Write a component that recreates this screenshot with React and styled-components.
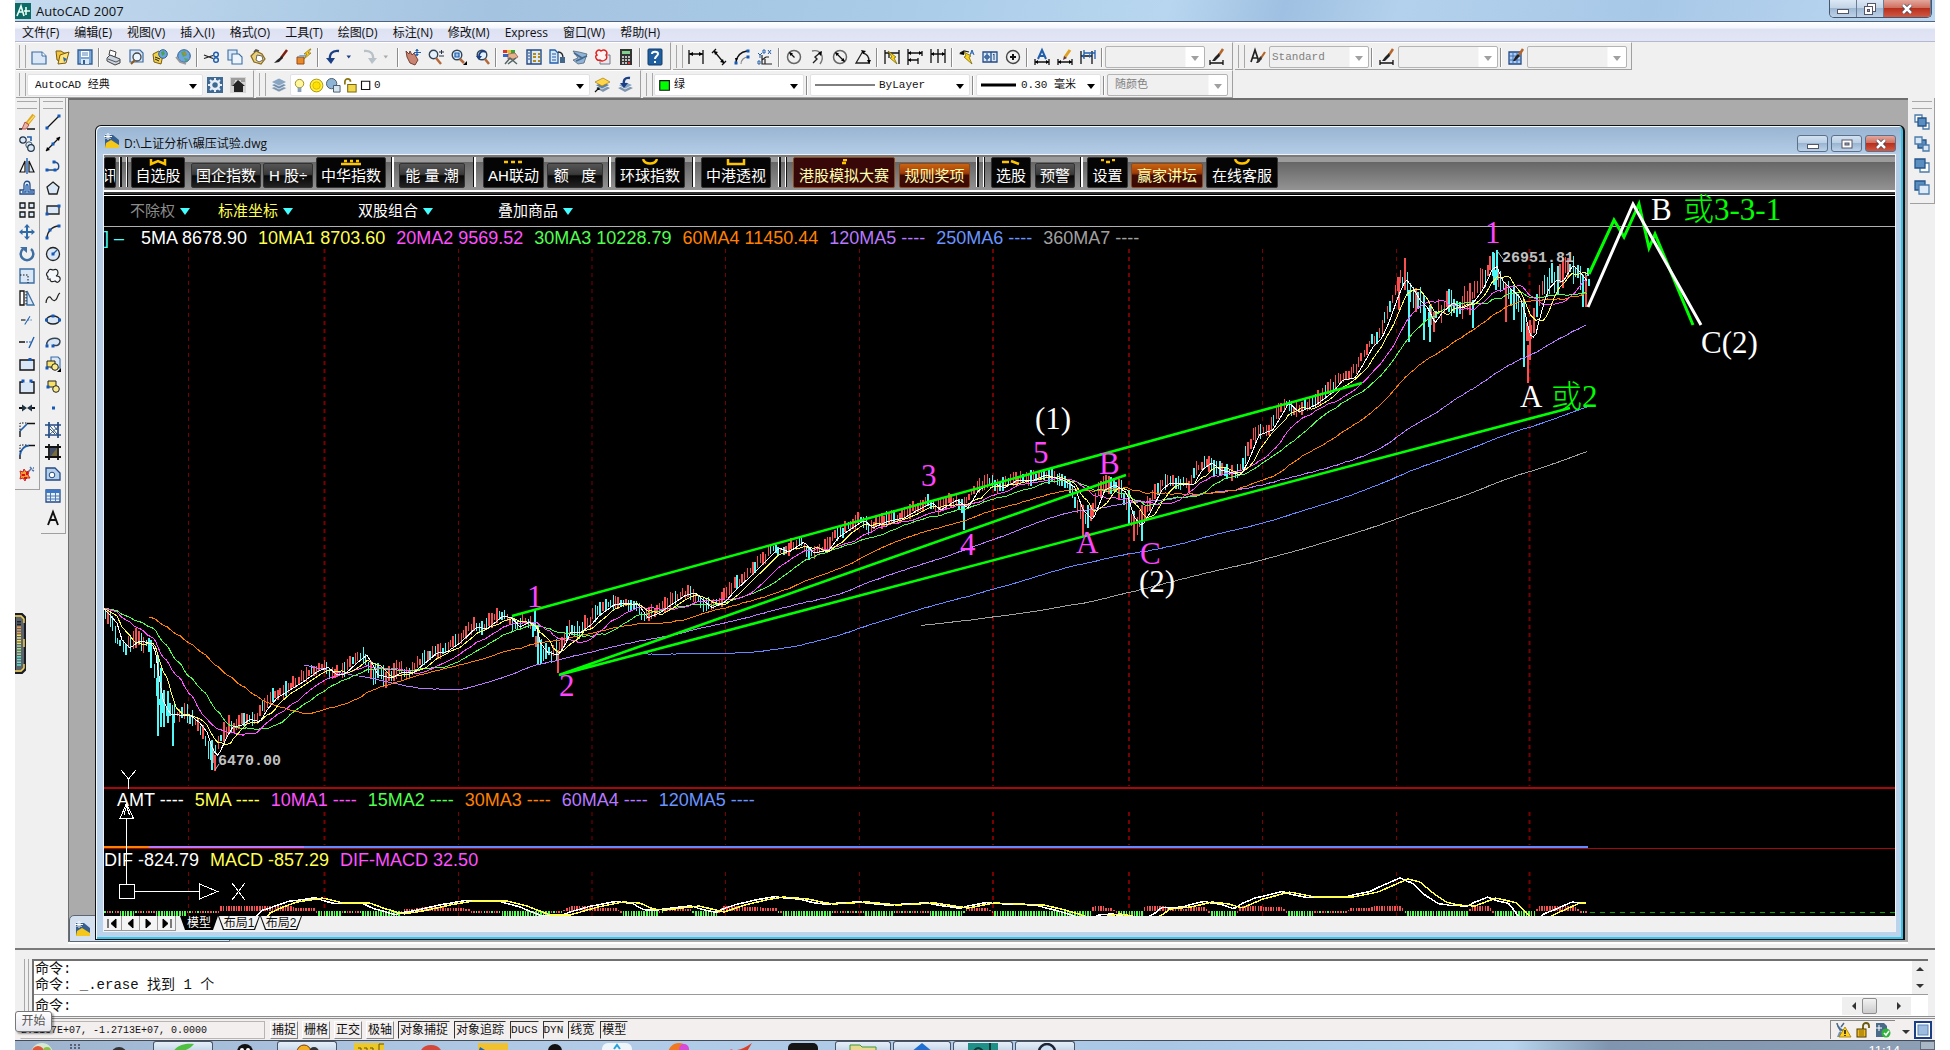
import React from "react";
import styled, { createGlobalStyle, css } from "styled-components";

const ui = `"Open Sans", "Noto Sans CJK SC", sans-serif`;
const fixed = `"Liberation Mono", "Noto Sans CJK SC", monospace`;
const sans = `"Liberation Sans", "Noto Sans CJK SC", sans-serif`;

const Global = createGlobalStyle`
  * { box-sizing: border-box; }
  body { margin: 0; background: #fff; overflow: hidden; }
  button, select, input { font: inherit; color: inherit; margin: 0; padding: 0; border: 0; background: none; border-radius: 0; }
  svg { display: block; flex: none; }
`;

const Page = styled.div`
  height: 100vh;
  padding: 0 15px;
  font: 12px/16px ${ui};
  color: #111;
`;
const AppWindow = styled.div`
  position: relative;
  display: flex;
  flex-direction: column;
  height: 100%;
  background: #f0f0f0;
  overflow: hidden;
`;

/* ---------- title and menu ---------- */
const TitleBar = styled.header`
  display: flex;
  align-items: center;
  height: 22px;
  flex: none;
  padding-right: 3px;
  gap: 5px;
  border-bottom: 1px solid #53627c;
  background: linear-gradient(105deg, #c5daee 0%, #b3cfe8 12%, #a4c3e0 25%, #a9cbe8 45%, #b8d6ef 60%, #9fc0e2 66%, #b3d1ec 72%, #a8c8e8 85%, #bcd8f0 100%);
`;
const TitleText = styled.h1`
  flex: 1;
  margin: 0;
  font: 13px/16px ${ui};
`;
const CaptionGroup = styled.div`
  display: flex;
  align-self: flex-start;
  height: 18px;
  border: 1px solid #46566b;
  border-top: 0;
  border-radius: 0 0 5px 5px;
  overflow: hidden;
`;
const redFace = css`background: linear-gradient(#e3a79d, #d0705f 45%, #b8301d 50%, #cf5a45);`;
const Caption = styled.button`
  display: flex;
  align-items: center;
  justify-content: center;
  width: ${(p) => (p.$close ? 47 : 27)}px;
  border-right: 1px solid #6b7d94;
  background: linear-gradient(#dce8f4, #c3d5e8 45%, #9fb8d2 50%, #bcd2e8);
  ${(p) => p.$close && redFace}
`;
const MenuBar = styled.nav`
  display: flex;
  align-items: center;
  flex: none;
  height: 20px;
  padding: 2px 0 0 7px;
  gap: 15px;
  border-bottom: 1px solid #b4b9d0;
  background: linear-gradient(#fff 0, #f4f6fc 30%, #dde2f3 40%, #e2e5f5 100%);
`;
const MenuItem = styled.button`
  font: 12px/16px ${ui};
  white-space: nowrap;
`;

/* ---------- toolbars ---------- */
const ToolbarRow = styled.div`
  display: flex;
  flex: none;
  height: 28px;
  padding-left: 1px;
`;
const Toolbar = styled.div`
  display: flex;
  align-items: center;
  padding: 2px 4px 0 11px;
  position: relative;
  border-right: 1px solid #a0a0a0;
  border-bottom: 1px solid #a0a0a0;
  border-top: 1px solid #fff;
  margin-right: 2px;
  &::before {
    content: "";
    position: absolute;
    left: 3px;
    top: 2px;
    bottom: 1px;
    width: 5px;
    border: solid #a8a8a8;
    border-width: 0 1px;
  }
`;
const ToolButton = styled.button`
  display: flex;
  align-items: center;
  justify-content: center;
  width: ${(p) => p.$w || 23}px;
  height: 22px;
`;
const Sep = styled.span`
  width: 6px;
  height: 19px;
  flex: none;
  background: linear-gradient(90deg, transparent 2px, #8c8c8c 2px 3px, #fff 3px 4px, transparent 4px);
`;
const ComboBox = styled.label`
  display: flex;
  align-items: center;
  width: ${(p) => p.$w}px;
  height: 22px;
  padding-left: ${(p) => p.$pad || 7}px;
  gap: 2px;
  background: ${(p) => (p.$off ? "linear-gradient(90deg,#f0f0f0 calc(100% - 19px),#fff calc(100% - 18px))" : "#fff")};
  border: ${(p) => (p.$off ? "1px solid #b4b4b4" : "1px solid #e2e2e6")};
  border-radius: 2px;
  color: ${(p) => (p.$off ? "#808080" : "#111")};
  position: relative;
  &::after {
    content: "";
    position: absolute;
    right: 5px;
    top: 9px;
    border: solid transparent;
    border-width: 5px 4px 0;
    border-top-color: ${(p) => (p.$off ? "#a0a0a0" : "#000")};
  }
`;
const ComboSelect = styled.select`
  appearance: none;
  flex: 1;
  min-width: 0;
  height: 20px;
  font: 11px/16px ${fixed};
  outline: 0;
  opacity: 1;
`;

function Combo({ w, value, label, off, icons, pad }) {
  return (
    <ComboBox $w={w} $off={off} $pad={pad}>
      {icons}
      <ComboSelect aria-label={label} disabled={off}>
        <option>{value}</option>
      </ComboSelect>
    </ComboBox>
  );
}

/* ---------- icon drawings, 16 x 16 ---------- */
const blue = "#1f5fae";
const pale = "#d9e7f6";
const L = (d, s = "#111", w = 1.3, f = "none") => <path d={d} stroke={s} strokeWidth={w} fill={f} />;
const Dot = ({ x, y }) => <rect x={x - 1.5} y={y - 1.5} width="3" height="3" fill="#1458b8" />;

const icons = {
  app: <><rect width="16" height="16" fill="#0d6b66" />{L("M2 13L6 3l3 10M3 9h5M11 4v8M9 8h6", "#e8fff8", 1.6)}</>,
  newDoc: <>{L("M1 3h10l4 4v8H1z", "#3b6ea5", 1.2, pale)}{L("M11 3v4h4", "#3b6ea5", 1, "#fff")}</>,
  open: <>{L("M2 2h5l3 2h4l-3 10-8-3z", "#7a5c10", 1, "#f1c53a")}{L("M6 6l9-3-3 11-8 1z", "#7a5c10", 1, "#ffe27a")}<path d="M9 8l4 2-3 3z" fill="#2b66b0" /></>,
  save: <>{L("M1 1h14v14H1z", "#2f5f98", 1.3, "#7ea8d6")}<path d="M4 2h8v6H4z" fill="#fff" />{L("M5 4h6M5 6h6", "#5b83b5", 1)}<path d="M4 10h8v5H4z" fill="#dce8f5" /><path d="M6 11h2v4H6z" fill="#2f5f98" /></>,
  print: <>{L("M4 1l6 2-1 5-6-2z", "#444", 1, "#fff")}{L("M1 9l3-3 10 4v4l-5 2-8-4z", "#444", 1, "#c9d3df")}{L("M2 10l8 3 4-2", "#555", 1)}</>,
  preview: <>{L("M1 1h10l3 3v9H1z", "#3b6ea5", 1.2, pale)}<circle cx="8" cy="8" r="4" fill="#eaf6ff" stroke="#444" strokeWidth="1.3" />{L("M6 11l-4 4", "#8a5a20", 2)}</>,
  publish: <>{L("M1 5l6-3 4 4-2 9-7-2z", "#7a5c10", 1, "#f1d04a")}<circle cx="11" cy="5" r="4.3" fill="#6aa5dc" stroke="#2f5f98" /><path d="M9 3l3-1 1 3-3 2z" fill="#4aa24a" />{L("M3 8l5 2M3 10l4 2", "#222", 1)}</>,
  globe: <><circle cx="9" cy="7" r="6.3" fill="#6aa5dc" stroke="#2f5f98" /><path d="M6 3l4-1 2 4-4 2zM9 9l4 1-2 3z" fill="#55a855" /><path d="M8 3l4 2-3 1z" fill="#e07a2a" />{L("M1 8l4 5 6 2", "#999", 1.800)}</>,
  cut: <>{L("M0 6l9 3.500M0 9.500L9 6.500", "#222", 1.3)}<circle cx="12" cy="5.500" r="2.300" fill="none" stroke={blue} strokeWidth="1.5" /><circle cx="12" cy="11" r="2.300" fill="none" stroke={blue} strokeWidth="1.5" /></>,
  copy: <>{L("M1 1h9v10H1z", "#3b6ea5", 1.1, pale)}{L("M5 5h7l3 3v7H5z", "#3b6ea5", 1.1, "#eef5fc")}</>,
  paste: <>{L("M1 7l5-5 6 3 3 5-4 5-7-2z", "#8a6a1a", 1.2, "#e9cf7c")}{L("M7 6l5 1 1 4-4 2-3-2z", "#666", 1, "#fff")}{L("M4 3l2-2 3 1", "#555", 1.6)}</>,
  brush: <>{L("M14 1L8 9", "#7c1f12", 2.500)}<path d="M9 7l1 2-4 4-5 1 3-3z" fill="#222" /></>,
  match: <>{L("M1 8h7v7H1z", "#9a4a10", 1, "#e8892a")}<path d="M1 8l3-2h7l-3 2z" fill="#7ea8d6" /><path d="M14 0L8 5h3l-3 5 7-6h-3l3-4z" fill="#ffd21a" stroke="#8a6a00" strokeWidth=".7" /></>,
  undo: <>{L("M14 2C7 1 4 5 5 12", "#1b3f85", 2.300)}<path d="M1 9h9l-4 6z" fill="#1b3f85" /></>,
  redo: <>{L("M2 2c7-1 10 3 9 10", "#b8c0c8", 2.300)}<path d="M6 9h9l-5 6z" fill="#b8c0c8" /></>,
  tri: <path d="M2 6h6l-3 4z" fill="#1b3f85" />,
  triOff: <path d="M2 6h6l-3 4z" fill="#aaa" />,
  pan: <><path d="M1 2l3 3 1-3 2 4 2-2 4 7-3 5-5-2L2 8z" fill="#c98572" stroke="#6a3528" strokeWidth=".9" />{L("M12 0v7M9 3.500h7", blue, 1.2)}<path d="M12 0l2 2h-4zM12 7l2-2h-4z" fill={blue} /></>,
  zoomRt: <><circle cx="5.500" cy="5.500" r="4.200" fill="#e4f1fc" stroke="#345" strokeWidth="1.4" />{L("M8 9l5 6", "#b5693a", 2.500)}{L("M11 3h5M13.500 1v4M11 7h5", "#234", 1)}</>,
  zoomWin: <><circle cx="6" cy="6" r="4.800" fill="#e4f1fc" stroke="#345" strokeWidth="1.4" />{L("M4 4h4v4H4z", blue, 1.2, "#9cc2ea")}{L("M9 10l4 4", "#b5693a", 2.500)}<path d="M16 12v4h-4z" /></>,
  zoomPrev: <><circle cx="8" cy="6" r="4.800" fill="#e4f1fc" stroke="#345" strokeWidth="1.4" />{L("M11 10l4 5", "#b5693a", 2.500)}{L("M12 3C7 1 5 4 5 8", "#1b3f85", 1.8)}<path d="M2 7h6l-3 4z" fill="#1b3f85" /></>,
  props: <><path d="M0 1h4v3H0z" fill="#d33" /><path d="M4 1h4v3H4z" fill="#e8c22a" /><path d="M8 1h4v3H8z" fill="#3a3" /><path d="M0 5h5v3H0z" fill="#36c" /><path d="M5 5l7-1 3 4-4 2-6 0z" fill="#e7b18c" stroke="#844" strokeWidth=".7" />{L("M2 15l5-6 7 6M5 15l8-6", "#566", 1.500)}</>,
  design: <>{L("M1 1h14v14H1z", "#234a85", 1.400, "#dce9f7")}{L("M5 1v14", "#234a85", 1.400)}{L("M7 5h3M12 5h2M7 8h3M12 8h2M7 12h3M12 12h2", "#b88a10", 2)}{L("M2 4h2M2 7h2M2 10h2", "#234a85", 1)}</>,
  palette: <>{L("M1 1h5l3 3v10H1z", blue, 1.300, pale)}{L("M3 5h4M3 8h4M3 11h4", blue, 1.200)}{L("M9 3c4 0 5 2 5 6", "#222", 1.300)}<path d="M11 8h5v6h-5z" fill="#468" /></>,
  sheet: <><path d="M1 2l6 1 8 2-3 9-6 1-5-4 5-2z" fill="#8fb4d8" stroke="#567" strokeWidth=".8" />{L("M2 4l8 5 5-2M4 12l7-3", "#47698c", 1.600)}</>,
  markup: <>{L("M5 6h10v9H5z", "#778", 1, "#e8e8ee")}{L("M2 2q2-2 4 0q3-2 5 0q2 2 0 4q2 3-1 5q-3 2-5 0q-3 1-4-2q-1-2 1-3q-2-2 0-4z", "#d22", 1.400, "#fff3f3")}</>,
  calc: <><rect x="2" y="0" width="12" height="16" fill="#333" /><rect x="4" y="2" width="8" height="3" fill="#7fd08a" />{L("M4 8h2M7 8h2M10 8h2M4 11h2M7 11h2M10 11h2M4 14h2M7 14h2", "#eee", 1.600)}<path d="M10 13h2v2h-2z" fill="#d33" /></>,
  help: <><rect x="1" y="0" width="14" height="16" rx="1" fill="#1f5f9f" stroke="#123c6c" />{L("M5 5c0-3 6-3 6 0 0 2-3 2-3 5M8 12v2", "#fff", 2)}</>,
  dLin: <>{L("M1 1v14M15 1v14M1 5h14")}<path d="M1 5l4-2v4zM15 5l-4-2v4z" /></>,
  dAli: <>{L("M1 4l4-4M11 16l4-4M3 2l10 12")}<path d="M3 2l4 1-3 3zM13 14l-4-1 3-3z" /></>,
  dArc: <>{L("M2 13C3 6 7 3 13 2", "#111", 1.300)}{L("M7 15c0-4 3-7 7-7", "#888", 1.100)}<path d="M2 13l-1-4h3z" /><Dot x={14} y={2} /><Dot x={14} y={8} /><Dot x={2} y={14} /></>,
  dOrd: <>{L("M5 6v9h10M5 11l4-3h3M8 15V8", "#222", 1.200)}{L("M1 4l2 2 2-2M3 6v3M11 1l3 4M14 1l-3 4M6 1h2v3H6zM1 12h2v3H1z", blue, 1)}</>,
  dRad: <><circle cx="8" cy="8" r="6.500" fill="none" stroke="#666" strokeWidth="1.500" />{L("M4 4l4.500 4.500")}<path d="M3 3l4 1.500L4.500 7z" /></>,
  dJog: <>{L("M3 2c9-2 13 6 8 13", "#777", 1.400)}{L("M4 14l4-4-2-2 6-5", "#222", 1.400)}<path d="M13 2l-1 5-3-3z" /></>,
  dDia: <><circle cx="8" cy="8" r="6.500" fill="none" stroke="#666" strokeWidth="1.500" />{L("M4 4l8 8")}<path d="M3 3l4 1.500L4.500 7zM13 13l-4-1.500L11.500 9z" /></>,
  dAng: <>{L("M8 2L1 14h14M8 4c4 1 6 4 6 8", "#222", 1.300)}<path d="M6 1l5 1-3 3zM14 15l-2-4h4z" /></>,
  dQuick: <>{L("M1 1v14M15 1v14M1 4h14M5 4v5")}<path d="M4 2l8 6-2 1 3 6-7-6 2-1z" fill="#ffd21a" stroke="#7a6a00" strokeWidth=".8" /></>,
  dBase: <>{L("M1 0v16M1 4h14M1 11h10M15 2v5M11 9v6")}<path d="M1 4l3-2v4zM1 11l3-2v4zM15 4l-3-2v4z" /></>,
  dCont: <>{L("M1 0v14M8 0v14M15 0v14M1 5h14")}<path d="M1 5l3-2v4zM15 5l-3-2v4z" /></>,
  leader: <>{L("M1 4l4-2 5 1", "#222", 1.200)}<path d="M0 5l5-3v4z" /><path d="M5 3l7 4-2 1 3 7-8-7 2-1z" fill="#ffd21a" stroke="#7a6a00" strokeWidth=".8" />{L("M11 6l2-5 2 5M12 4h2", blue, 1)}</>,
  tol: <>{L("M1 3h14v10H1zM9 3v10", "#234a85", 1.300, pale)}<circle cx="5" cy="8" r="2" fill="none" stroke={blue} />{L("M5 4v8M2 8h6M12 5v6M11 6l1-1", "#234a85", 1)}</>,
  center: <><circle cx="8" cy="8" r="6.500" fill="none" stroke="#444" strokeWidth="1.400" />{L("M8 5v6M5 8h6", "#111", 2)}</>,
  dEdit: <>{L("M4 10L8 1l4 9M5.500 7h5", blue, 2)}{L("M1 10v6M15 10v6M1 13h14")}<path d="M1 13l3-2v4zM15 13l-3-2v4z" /></>,
  dTedit: <>{L("M13 1L8 8", "#e0a020", 3)}<path d="M7 7l3 2-4 2z" fill="#633" />{L("M1 10v6M15 10v6M1 13h14")}<path d="M1 13l3-2v4zM15 13l-3-2v4z" /></>,
  dUpd: <>{L("M1 2v13M12 2v13M1 7h11")}{L("M4 1v9M15 1v9M4 4h11", blue, 1.300)}<path d="M1 7l3-2v4zM12 7l-3-2v4z" fill={blue} /></>,
  dBrush: <>{L("M14 0l-4 6", "#b5652a", 2.500)}<path d="M10 4l1 3-5 5H3l3-4z" fill="#222" />{L("M1 11v5M14 11v5M1 14h13")}</>,
  tBrush: <>{L("M1 13L5 1l4 12M2 9h6", "#222", 1.700)}{L("M15 3l-4 6", "#b5652a", 2.200)}<path d="M11 7l1 3-4 4H6l2-4z" fill="#333" /></>,
  tabBrush: <>{L("M1 3h12v12H1z", "#234a85", 1.300, "#aecbf0")}{L("M1 7h12M1 11h12M5 3v12M9 3v12", "#3c6fb6", 1)}{L("M15 0l-4 6", "#b5652a", 2.500)}<path d="M10 5l2 2-5 5H5l2-4z" fill="#222" /></>,
  gear: <><rect width="16" height="16" fill="#3d6994" /><circle cx="8" cy="8" r="4" fill="none" stroke="#e6eef7" strokeWidth="2.500" />{L("M8 1v3M8 12v3M1 8h3M12 8h3M3 3l2 2M11 11l2 2M13 3l-2 2M5 11l-2 2", "#e6eef7", 2)}</>,
  home: <><rect width="16" height="16" fill="#d4d4d4" />{L("M1 2h14M1 4h4M11 4h4M1 6h3M1 8h2", "#666", 1)}<path d="M8 3l7 6h-2v6H4V9H2z" fill="#222" /></>,
  layers: <><path d="M0 11l8-3 8 3-8 4z" fill="#7d95ad" stroke="#fff" strokeWidth=".5" /><path d="M0 8l8-3 8 3-8 4z" fill="#6d8cae" stroke="#fff" strokeWidth=".7" /><path d="M0 5l8-4 8 4-8 4z" fill="#89a5c1" stroke="#fff" strokeWidth=".7" /></>,
  layerCur: <><path d="M2 11l8-3 6 3-7 4z" fill="#7d95ad" /><path d="M1 8l8-3 7 3-8 4z" fill="#5f83aa" stroke="#fff" strokeWidth=".7" /><path d="M1 5l8-4 7 4-8 4z" fill="#ffd64a" stroke="#a67b00" strokeWidth=".7" />{L("M1 15l4-4M3 11h2v2", "#111", 1.200)}</>,
  layerPrev: <><path d="M1 11l8-3 7 3-8 4z" fill="#7d95ad" /><path d="M1 8l8-3 7 3-8 4z" fill="#89a5c1" stroke="#fff" strokeWidth=".7" />{L("M13 1C8 0 6 3 7 8", "#1b3f85", 2.300)}<path d="M3 6h8l-4 5z" fill="#1b3f85" /></>,
  bulb: <><circle cx="8" cy="6" r="4.500" fill="#fff79a" stroke="#9a8a20" /><path d="M6 10h4v5H6z" fill="#8aa0b8" /></>,
  sun: <><circle cx="8" cy="8" r="6.800" fill="#ffef3a" stroke="#a89010" /><circle cx="8" cy="8" r="4" fill="#ffe000" stroke="#c8a800" strokeWidth=".7" /></>,
  vpFreeze: <><circle cx="6" cy="6" r="5.500" fill="#8db4d4" stroke="#456" />{L("M8 8h7v7H8z", "#456", 1, "#d3e3f0")}</>,
  unlock: <>{L("M2 7V4c0-4 6-4 6 0", "#8a7410", 1.800)}{L("M5 7h9v8H5z", "#7a6610", 1.100, "#f0d84a")}</>,
  box: <path d="M2 3h11v11H2z" fill="#fff" stroke="#111" strokeWidth="1.500" />,
  green: <path d="M2 3h11v11H2z" fill="#0f0" stroke="#111" strokeWidth="1.300" />,
  erase: <>{L("M15 1L8 10", "#e0a820", 4)}{L("M15 2L9 9", "#f8dc70", 1.200)}<path d="M6 8l4 3-3 4H3z" fill="#e9b3a5" stroke="#a33" strokeWidth=".8" />{L("M0 15h3M8 15h8")}</>,
  copyObj: <><circle cx="4" cy="4" r="3.200" fill={pale} stroke="#234" strokeWidth="1.200" /><circle cx="10" cy="9" r="3.200" fill={pale} stroke="#456" /><circle cx="12" cy="12" r="3.300" fill={pale} stroke="#234" strokeWidth="1.200" />{L("M8 1h4v4", blue, 1.600)}</>,
  mirror: <>{L("M6 3v11H1z", "#111", 1.200, "#fff")}{L("M10 3v11h5z", "#111", 1.200, pale)}{L("M8 0v16", blue, 1.400)}</>,
  offset: <>{L("M1 14v-4h4V5c0-5 6-5 6 0v5h4v4z", "#234a85", 1.300, "#eaf2fb")}{L("M3 12h4V6c0-2 2-2 2 0v6h5", blue, 1.300)}</>,
  array: <>{L("M1 1h5v5H1zM10 1h5v5h-5zM1 10h5v5H1zM10 10h5v5h-5z", "#111", 1.300, pale)}</>,
  move: <>{L("M8 1v14M1 8h14", "#2f6aa8", 2)}<path d="M8 0l3 3.500H5zM8 16l3-3.500H5zM0 8l3.500-3v6zM16 8l-3.500-3v6z" fill="#2f6aa8" /></>,
  rotate: <>{L("M4 3a6.300 6.300 0 1 0 8 0", "#3d6fa3", 2.500)}<path d="M1 1h7v6z" fill="#3d6fa3" /></>,
  scale: <>{L("M1 1h14v14H1z", "#3d6fa3", 1.400, pale)}<path d="M1 7h8v8" fill="none" stroke="#111" strokeDasharray="1.500 1.500" /></>,
  stretch: <>{L("M1 1h4v14H1z", "#111", 1.300, "#fff")}{L("M8 1l7 14H8z", "#3d6fa3", 1.300, pale)}<path d="M7 1v14" stroke="#111" strokeDasharray="1.500 1.500" /></>,
  trim: <>{L("M12 3L5 14", "#1f5fae", 1.400)}{L("M0 8h6", "#111", 1.500)}<path d="M9 8h7" stroke={blue} strokeDasharray="2 1.500" /></>,
  extend: <>{L("M15 3l-5 11", blue, 1.400)}{L("M0 8h6", "#111", 1.500)}<path d="M7 8h5" stroke={blue} strokeDasharray="2 1" /></>,
  breakPt: <>{L("M1 4h14v10H1z", "#111", 1.400, pale)}<Dot x={11} y={3.500} /></>,
  breakAt: <>{L("M4 4H1v11h14V4h-3", "#111", 1.400, pale)}<Dot x={4} y={3} /><Dot x={12} y={3} /></>,
  join: <>{L("M0 8h5M11 8h5", "#111", 1.800)}<path d="M3 4.500L8 8l-5 3.500zM13 4.500L8 8l5 3.500z" fill="#234" /></>,
  chamfer: <>{L("M1 15V9M8 1.500h8", "#111", 1.400)}{L("M1 9l7-7", blue, 1.700)}<path d="M1 8V1h7" fill="none" stroke="#111" strokeDasharray="1.500 1.500" /></>,
  fillet: <>{L("M1 15v-4M10 1.500h6", "#111", 1.400)}{L("M1 11C2 5 5 2 10 1.500", blue, 1.900)}<path d="M1 8V1h7" fill="none" stroke="#111" strokeDasharray="1.500 1.500" /></>,
  explode: <><path d="M1 5l3 1 1-3 2 3 3-1-1 4 2 3-4 0-1 3-2-3-3 1 1-4z" fill="#f0a030" stroke="#c22" strokeWidth="1" /><path d="M3 8h3v2H3zM7 6h2v3H7zM5 11h3v2H5z" fill="#d11" />{L("M10 5l3-3M11 1l1 1M14 2h1M13 4l2 1", "#57a", 1.500)}</>,
  line: <>{L("M2 14L14 2", "#111", 1.300)}<Dot x={2} y={14} /><Dot x={14} y={2} /></>,
  xline: <>{L("M1 15L15 1", "#111", 1.300)}<Dot x={8} y={8} /><path d="M15 1l-1 4-3-3zM1 15l1-4 3 3z" /></>,
  pline: <>{L("M2 12h8c5 0 5-7 0-8", "#234a85", 1.400)}<Dot x={2} y={12} /><Dot x={10} y={12} /><Dot x={9} y={4} /></>,
  polygon: L("M8 2l6 5-2 7H4L2 7z", "#222", 1.300, pale),
  rect: <>{L("M2 4h12v8H2z", "#222", 1.300, pale)}<Dot x={2} y={12} /><Dot x={14} y={4} /></>,
  arc: <>{L("M2 14C2 8 7 2 14 2", "#222", 1.300)}<Dot x={2} y={14} /><Dot x={5} y={6} /><Dot x={14} y={2} /></>,
  circle: <><circle cx="8" cy="8" r="6.500" fill={pale} stroke="#222" strokeWidth="1.300" />{L("M8 8l4-4", blue, 1.200)}<Dot x={8} y={8} /></>,
  cloud: L("M3 9q-3-3 0-5q1-4 5-2q5-2 5 3q0 2-2 3q5 0 4 4q-2 4-5 1q-5 2-5-2q-3 1-2-2z", "#222", 1.200, "#f4f8fc"),
  spline: L("M1 13C1 9 4 5 6 8c2 4 5 3 6 0 1-2 1-4 3-5", "#222", 1.200),
  ellipse: <><ellipse cx="8" cy="8" rx="6.500" ry="4" fill={pale} stroke="#222" strokeWidth="1.300" /><Dot x={8} y={4} /><Dot x={1.500} y={8} /><Dot x={14.500} y={8} /></>,
  elArc: <>{L("M2 11C0 4 14 2 15 7c0 5-4 5-7 4", "#345", 1.400, pale)}<Dot x={2} y={12} /><Dot x={8} y={12} /></>,
  insert: <>{L("M6 1h7l2 2v9H6z", "#3b6ea5", 1.100, pale)}{L("M2 5h8v6H2z", "#222", 1, "#f5e06a")}<circle cx="10" cy="11" r="3.300" fill="#f8e98a" stroke="#222" /><Dot x={2} y={12} /><path d="M16 12v4h-4z" /></>,
  block: <>{L("M3 3h8v6H3z", "#222", 1, "#f5e06a")}<circle cx="11" cy="11" r="3.300" fill="#f8e98a" stroke="#222" /><Dot x={3} y={9} /></>,
  point: <Dot x={8.500} y={8} />,
  hatch: <>{L("M4 0v16M13 0v16M0 3h16M0 13h16", "#234a85", 1.700)}<path d="M5 4h7v8H5z" fill="#fff" />{L("M5 7l5 5M5 4l7 8M9 4l3 4", "#357", 1)}{L("M4 13L14 4", "#357", 1)}</>,
  gradient: <>{L("M4 0v16M13 0v16M0 3h16M0 13h16", "#111", 1.800)}<path d="M5 4h7v8H5z" fill="#44506a" /><path d="M12 4v8H6z" fill="#7a6d3c" /></>,
  region: <>{L("M1 2h9l5 5v7H1z", "#234a85", 1.300, "#b7d0ea")}<circle cx="7" cy="9" r="2.800" fill="#fff" stroke="#234a85" /></>,
  table: <>{L("M1 2h14v12H1z", "#234a85", 1.300, "#e8f1fb")}<path d="M1 2h14v3H1z" fill="#3c78c8" />{L("M1 8h14M1 11h14M5.500 5v9M10.500 5v9", "#4a78b0", 1)}</>,
  mtext: L("M3 15L8 2l5 13M5 10h6", "#111", 1.900),
  front: <>{L("M1 1h7v7H1z", "#4b7aa8", 1.300, "#fff")}{L("M9 9h6v6H9z", "#4b7aa8", 1.300, "#fff")}{L("M4 4h8v8H4z", "#24558a", 1.300, "#5a8dc0")}</>,
  back: <>{L("M4 4h8v8H4z", "#24558a", 1.300, "#5a8dc0")}{L("M1 1h7v7H1z", "#4b7aa8", 1.300, "#d7e6f4")}{L("M9 9h6v6H9z", "#4b7aa8", 1.300, "#d7e6f4")}</>,
  above: <>{L("M6 5h9v9H6z", "#4b7aa8", 1.300, "#fff")}{L("M1 1h10v9H1z", "#24558a", 1.300, "#5a8dc0")}</>,
  under: <>{L("M1 1h10v9H1z", "#24558a", 1.300, "#5a8dc0")}{L("M5 5h10v9H5z", "#4b7aa8", 1.300, "#dcebf7")}</>,
  dwg: <><path d="M1 2h8l6 5v8H1z" fill="#365f8f" /><path d="M1 15l1-5 5-3 8 5v3z" fill="#f5c71a" />{L("M4 0v7M0 3.500h8M1.500 1l5 5M6.500 1l-5 5", "#fff", 1)}</>,
  dish: <><path d="M1 1l7 7-3 2zM4 10l-2 5h6l-2-5z" fill="#6f93b5" />{L("M2 1c1 6 4 8 8 7M6 5l3-4", "#47698c", 1.500)}<path d="M10 5l6 10H4z" fill="#ffd21a" stroke="#a07a00" strokeWidth=".8" />{L("M10 8v4M10 13v1", "#111", 1.500)}</>,
  goldLock: <>{L("M8 7V4c0-4 6-4 6 0v2", "#6a5a10", 1.800)}<rect x="2" y="7" width="9" height="8" fill="#f0b81a" stroke="#4a3a00" />{L("M4 9h5M4 11h5M4 13h5", "#8a6a00", 1)}</>,
  trust: <><path d="M1 1h8l3 3v11H1z" fill="#4a6a8a" />{L("M4 3v6M1 6h6", "#fff", 1)}<circle cx="11" cy="11" r="4.500" fill="#2fb53a" />{L("M9 11l2 2 3-4", "#fff", 1.600)}</>,
  full: <><rect x="0" y="0" width="16" height="16" fill="#fff" stroke="#1b3f85" strokeWidth="2" /><rect x="3" y="3" width="10" height="10" fill="#9dbde0" stroke="#5a86b8" /></>,
};

const Icon = ({ n, s = 16 }) => (
  <svg width={s} height={s} viewBox="0 0 16 16" aria-hidden="true" overflow="visible">{icons[n]}</svg>
);
const Tools = ({ list }) =>
  list.split(" ").map((n, i) =>
    n === "|" ? <Sep key={i} /> : (
      <ToolButton key={i} $w={n.startsWith("tri") ? 14 : 23} aria-label={n}><Icon n={n} s={n.startsWith("tri") ? 12 : 16} /></ToolButton>
    )
  );

/* ---------- work area ---------- */
const WorkArea = styled.main`
  display: flex;
  flex: 1;
  min-height: 0;
`;
const SideBars = styled.div`
  display: flex;
  align-items: flex-start;
  gap: 1px;
  padding-right: ${(p) => (p.$right ? 0 : 2)}px;
  padding-left: ${(p) => (p.$right ? 2 : 0)}px;
`;
const SideBar = styled.div`
  display: flex;
  flex-direction: column;
  align-items: center;
  width: 25px;
  padding-bottom: 4px;
  border: solid #a0a0a0;
  border-width: 0 1px 1px 0;
  &::before {
    content: "";
    width: 20px;
    height: 6px;
    margin: 3px 0 2px;
    border: solid #a8a8a8;
    border-width: 1px 0;
  }
`;
const Desktop = styled.section`
  position: relative;
  flex: 1;
  margin-bottom: 6px;
  background: #ababab;
  border: solid #6e6e6e;
  border-width: 2px 0 0 1px;
  box-shadow: 0 2px 0 #fff;
`;
const Minimized = styled.div`
  position: absolute;
  left: 0;
  bottom: 0;
  display: flex;
  align-items: center;
  width: 161px;
  height: 27px;
  padding-left: 5px;
  border: 1px solid #5c6674;
  border-radius: 5px 5px 0 0;
  background: #d5e0ee;
`;
const DocWindow = styled.article`
  position: absolute;
  inset: 25px 3px 2px 26px;
  display: flex;
  flex-direction: column;
  padding: 0 8px 8px;
  border: 1px solid #111;
  border-right: 2px solid #111;
  border-radius: 6px 6px 0 0;
  box-shadow: inset 1px 1px 0 #f4faff, inset -2px -2px 0 #35c4e8;
  background: linear-gradient(#98b4d1 0, #b4cce6 28px, #bcd3ec 100%);
`;
const DocTitle = styled.header`
  display: flex;
  align-items: center;
  flex: none;
  height: 29px;
  gap: 4px;
`;
const DocName = styled.h2`
  flex: 1;
  margin: 0;
  padding-top: 6px;
  font: 12px/16px ${ui};
`;
const DocCaption = styled.button`
  display: flex;
  align-items: center;
  justify-content: center;
  width: 31px;
  height: 17px;
  margin: 6px -1px 0 0;
  border: 1px solid #5c7189;
  border-radius: 3px;
  background: linear-gradient(#d3e2f1, #b9cee4 48%, #9ab5d1 50%, #bdd3ea);
  ${(p) => p.$close && redFace}
`;
const DocBody = styled.div`
  display: flex;
  flex-direction: column;
  flex: 1;
  min-height: 0;
  border-top: 2px solid #7a7a7a;
  box-shadow: 0 0 0 1px #eef3f8;
  background: #f0f0f0;
`;
const Canvas = styled.div`
  position: relative;
  display: flex;
  flex-direction: column;
  flex: 1;
  min-height: 0;
  overflow: hidden;
  background: #000;
`;
const Drawing = styled.svg`
  position: absolute;
  left: 0;
  top: 0;
`;

const StockBar = styled.div`
  display: flex;
  flex: none;
  height: 39px;
  padding-bottom: 8px;
  background: linear-gradient(#9c9c9c 0 5px, #666 5px, #939393 33px, #fff 33px 35px, #333 35px 37px, #000 37px 38px, #fff 38px);
`;
const StockButton = styled.button`
  display: flex;
  flex-direction: column;
  align-items: center;
  justify-content: flex-end;
  align-self: flex-end;
  flex: none;
  width: ${(p) => p.$w}px;
  height: ${(p) => (p.$small ? 25 : 31)}px;
  padding-bottom: 1px;
  overflow: hidden;
  border: 1px solid #222;
  border-radius: 2px;
  font: 15px/20px ${sans};
  white-space: pre;
  color: ${(p) => (p.$hot ? "#ffffb0" : "#fff")};
  background: ${(p) => (p.$hot ? (p.$small ? "linear-gradient(#c86410, #a03c08 40%, #400c04 50%, #3c0804)" : "#380808") : p.$small ? "linear-gradient(#555, #3a3a3a 45%, #080808 52%, #222)" : "#050505")};
  border-color: ${(p) => (p.$hot ? "#8a4a20" : "#333")};
`;
const StockGap = styled.span`
  flex: none;
  width: ${(p) => p.$w}px;
  height: 30px;
  background: ${(p) => {
    const m = p.$w / 2 | 0;
    if (!p.$n) return "none";
    if (p.$n === 1) return `linear-gradient(90deg, transparent ${m - 1}px, #111 ${m - 1}px ${m}px, #fff ${m}px ${m + 2}px, transparent ${m + 2}px)`;
    return `linear-gradient(90deg, transparent ${m - 4}px, #fff ${m - 4}px ${m - 3}px, #111 ${m - 3}px ${m - 1}px, transparent ${m - 1}px ${m + 3}px, #fff ${m + 3}px ${m + 4}px, #111 ${m + 4}px ${m + 5}px, transparent ${m + 5}px)`;
  }};
`;
const OptionRow = styled.div`
  display: flex;
  align-items: center;
  flex: none;
  height: 31px;
  padding-left: 26px;
  border-bottom: 1px solid #b0b0b0;
  font: 15px/20px ${sans};
`;
const Option = styled.button`
  display: flex;
  align-items: center;
  gap: 5px;
  margin-right: ${(p) => p.$gap}px;
  color: ${(p) => p.$c};
  &::after {
    content: "";
    border: solid transparent;
    border-width: 7px 5px 0;
    border-top-color: #4ff;
  }
`;
const Pane = styled.section`
  flex: ${(p) => (p.$h ? `0 0 ${p.$h}px` : "1")};
  border-bottom: ${(p) => p.$line || 0}px solid #a80808;
`;
const Legend = styled.div`
  display: flex;
  gap: 11px;
  height: 24px;
  padding-left: ${(p) => p.$pad}px;
  font: 18px/23px ${sans};
  white-space: pre;
`;
const Tint = styled.span`
  color: ${(p) => p.$c};
`;
const CursorMark = styled.span`
  width: 26px;
  color: #4ff;
`;

const TabStrip = styled.nav`
  display: flex;
  flex: none;
  height: 15px;
  font: 12px/14px ${sans};
`;
const TabArrow = styled.button`
  display: flex;
  align-items: center;
  justify-content: center;
  width: 18px;
  border-right: 1px solid #999;
  border-bottom: 1px solid #999;
  background: #f4f4f4;
`;
const SheetTab = styled.button`
  width: ${(p) => p.$w}px;
  height: 14px;
  margin-left: ${(p) => (p.$on ? 4 : 0)}px;
  color: ${(p) => (p.$on ? "#fff" : "#111")};
  background: ${(p) => (p.$on ? "#000" : "#111")};
  clip-path: polygon(0 0, 100% 0, calc(100% - 5px) 100%, 5px 100%);
  position: relative;
  z-index: 0;
  &::before {
    content: "";
    position: absolute;
    z-index: -1;
    inset: 0 1px 1px 1px;
    background: ${(p) => (p.$on ? "#000" : "#f4f4f4")};
    clip-path: polygon(0 0, 100% 0, calc(100% - 5px) 100%, 5px 100%);
  }
`;

/* ---------- command line, status bar, task bar ---------- */
const CommandPanel = styled.section`
  flex: none;
  height: 71px;
  padding: 9px 7px 0 9px;
  display: flex;
  gap: 3px;
  border-top: 2px solid #7a7a7a;
  border-bottom: 3px double #8e8e8e;
`;
const Grip = styled.span`
  width: 5px;
  border: solid #a8a8a8;
  border-width: 0 1px;
`;
const CommandBox = styled.div`
  flex: 1;
  display: flex;
  flex-direction: column;
  border: solid #707070;
  border-width: 2px 0 0 2px;
  background: #fff;
  font: 14px/16px ${fixed};
`;
const HistoryRow = styled.div`
  display: flex;
  height: 34px;
  border-bottom: 1px solid #9a9a9a;
`;
const History = styled.pre`
  flex: 1;
  margin: 0;
  padding-left: 1px;
  font: inherit;
`;
const PromptRow = styled.label`
  display: flex;
  align-items: center;
  flex: 1;
  padding-left: 1px;
`;
const PromptInput = styled.input`
  flex: 1;
  outline: 0;
`;
const VScroll = styled.div`
  display: flex;
  flex-direction: column;
  justify-content: space-around;
  align-items: center;
  width: 16px;
  background: #efefef;
`;
const HScroll = styled.div`
  display: flex;
  align-items: center;
  justify-content: space-between;
  width: 69px;
  height: 18px;
  margin-right: 17px;
  padding: 0 7px;
  background: #efefef;
`;
const Thumb = styled.span`
  width: 15px;
  height: 16px;
  margin-right: 14px;
  border: 1px solid #8e8e8e;
  border-radius: 2px;
  background: linear-gradient(#f2f2f2, #ccc);
`;
const StatusBar = styled.footer`
  display: flex;
  align-items: center;
  flex: none;
  height: 21px;
  padding: 0 4px 0 5px;
  gap: 5px;
  background: #f3efef;
`;
const Coords = styled.output`
  width: 245px;
  height: 18px;
  border: 1px solid #b8b4b4;
  border-left-color: transparent;
  font: 10px/17px ${fixed};
  white-space: pre;
`;
const Mode = styled.button`
  height: 18px;
  padding: 0 1px;
  border: 1px solid;
  border-color: ${(p) => (p.$on ? "#333 #eee #eee #333" : "#fff #888 #888 #fff")};
  font: 12px/14px ${sans};
`;
const ModeSmall = styled(Mode)`
  font: 11px/14px ${fixed};
  padding: 0;
`;
const Modes = styled.div`
  display: flex;
  flex: 1;
  gap: 4px;
`;
const Tray = styled.div`
  display: flex;
  gap: 4px;
  padding: 1px 4px;
  border: solid #888;
  border-width: 1px 0 0 1px;
`;
const TaskBar = styled.footer`
  display: flex;
  flex: none;
  height: 10px;
  overflow: hidden;
  border-top: 1px solid #444c58;
  background: linear-gradient(90deg, #9cb2cc 0, #a5bcd8 8%, #b2cce8 30%, #aac8e6 60%, #b8d4ee 78%, #8096b0 83%, #8c9fb5 100%);
`;
const Task = styled.button`
  display: flex;
  justify-content: center;
  align-items: flex-start;
  flex: none;
  width: ${(p) => p.$w || 60}px;
  margin-left: 2px;
  padding-top: 2px;
  border-radius: 3px 3px 0 0;
  ${(p) => p.$on && css`border: 1px solid #49566a; border-bottom: 0; padding-top: 1px; background: linear-gradient(#e6eef7, #c8d9eb);`}
`;
const Spacer = styled.span`
  flex: 1;
`;
const Clock = styled.time`
  font: 13px/14px ${sans};
  color: #fff;
  padding-top: 3px;
  margin-right: 20px;
`;
const ShowDesktop = styled.button`
  width: 15px;
  border: 1px solid #5b6b7d;
  background: #a8b6c6;
`;
const StartTip = styled.div`
  position: absolute;
  left: 0;
  bottom: 18px;
  width: 37px;
  height: 21px;
  border: 1px solid #777;
  border-radius: 3px;
  background: linear-gradient(#fff, #e6e6ee);
  box-shadow: 2px 2px 2px rgba(0, 0, 0, 0.35);
  color: #555;
  text-align: center;
  font: 12px/18px ${ui};
`;
const SideTab = styled.svg`
  position: absolute;
  left: 0;
  top: 613px;
`;

/* ---------- chart data ---------- */
const trace = [-20,608, 95,608, 104,609, 110,615, 117,623, 122,640, 130,648, 140,641, 150,643, 155,648, 158,670, 163,700, 170,714, 178,715, 190,715, 200,723, 207,732, 213,750, 218,756, 227,737, 233,727, 243,725, 250,719, 260,722, 267,710, 277,698, 290,690, 303,682, 317,672, 328,667, 337,675, 345,674, 357,663, 367,655, 373,665, 378,675, 392,678, 403,672, 413,673, 423,665, 437,653, 447,652, 460,643, 477,627, 487,629, 503,616, 512,618, 520,627, 530,622, 537,627, 540,642, 547,652, 558,655, 564,647, 571,632, 580,633, 591,625, 600,615, 614,605, 625,603, 639,605, 648,618, 661,612, 671,605, 686,595, 696,593, 705,602, 712,608, 725,602, 736,590, 750,577, 764,563, 779,548, 789,552, 804,542, 814,553, 829,550, 839,537, 857,525, 864,520, 873,528, 886,522, 904,518, 918,510, 932,503, 941,510, 957,500, 968,508, 979,490, 993,483, 1004,488, 1018,480, 1032,481, 1046,475, 1063,480, 1075,487, 1083,510, 1093,520, 1105,490, 1115,485, 1127,493, 1134,517, 1142,526, 1150,513, 1162,490, 1170,483, 1194,485, 1202,470, 1212,463, 1221,470, 1241,475, 1249,460, 1259,435, 1273,430, 1289,403, 1299,412, 1316,405, 1333,392, 1343,380, 1355,378, 1363,365, 1373,347, 1382,338, 1390,320, 1398,297, 1406,279, 1413,288, 1420,300, 1428,308, 1435,323, 1443,312, 1453,303, 1463,308, 1473,303, 1483,290, 1492,270, 1497,266, 1502,280, 1510,288, 1520,297, 1525,313, 1530,335, 1535,338, 1540,317, 1548,290, 1557,280, 1563,282, 1573,265, 1580,272, 1588,282];
const macdTrace = [104,930, 255,930, 270,913, 283,907, 297,902, 323,898, 343,903, 370,903, 383,908, 403,914, 423,911, 450,905, 473,901, 507,901, 527,906, 550,915, 570,915, 598,907, 623,902, 640,903, 653,909, 665,910, 699,906, 724,912, 745,905, 766,900, 783,897, 808,899, 821,902, 834,904, 867,902, 897,905, 935,903, 968,908, 994,903, 1044,905, 1065,910, 1082,915, 1095,922, 1107,916, 1120,914, 1132,916, 1147,922, 1162,915, 1170,909, 1191,907, 1212,902, 1229,904, 1242,908, 1263,899, 1290,892, 1315,897, 1353,897, 1378,892, 1408,879, 1420,882, 1433,893, 1446,902, 1458,905, 1475,906, 1496,898, 1517,903, 1528,915, 1540,924, 1553,915, 1580,903, 1588,903];

const at = (pts, x) => {
  for (let i = 2; i < pts.length; i += 2) {
    if (x <= pts[i]) {
      const t = (x - pts[i - 2]) / (pts[i] - pts[i - 2]);
      return pts[i - 1] + Math.max(0, t) * (pts[i + 1] - pts[i - 1]);
    }
  }
  return pts[pts.length - 1];
};
const step = 2.58;
const average = (n, from) => {
  const out = [];
  const terms = n / 5;
  for (let x = from; x <= 1588; x += step) {
    let sum = 0;
    for (let k = 0; k < terms; k++) sum += at(trace, x - k * 5 * step);
    out.push(`${x.toFixed(1)},${(sum / terms).toFixed(1)}`);
  }
  return out.join(" ");
};
const averages = [
  [360, 921, "#a0a0a0"], [250, 641, "#6488ff"], [120, 304, "#b878ff"], [60, 149, "#ff8000"],
  [30, 104, "#50ff50"], [20, 104, "#ff50ff"], [10, 104, "#ffff50"], [5, 104, "#ffffff"],
].map(([n, from, c]) => ({ c, pts: average(n, from) }));

const rand = (i) => {
  const v = Math.sin(i * 127.1 + 3.7) * 43758.5453;
  return v - Math.floor(v);
};
const candles = [];
for (let i = 0, x = 105; x < 1589; x += step, i++) {
  const mid = at(trace, x + 5);
  const slope = at(trace, x + 8) - at(trace, x + 1);
  const wild = x < 230 || (x > 368 && x < 405) || (x > 535 && x < 585) || (x > 1078 && x < 1150) ? 1.3 : x > 1400 ? 2 : 0.9;
  const up = 3 + rand(i) * 8 * wild;
  const down = 1 + rand(i + 900) * 7 * wild;
  const red = slope < 0 ? rand(i + 77) > 0.22 : rand(i + 77) > 0.78;
  candles.push([x, mid - up, mid + down, red, rand(i + 40) > 0.65 ? 2 : 1]);
}
const spikes = [
  [157.5, 655, 736, 0], [161, 668, 727, 0], [164, 690, 727, 0], [168, 691, 723, 0], [173, 715, 746, 0], [151, 640, 668, 0], [212, 740, 770, 0], [215, 755, 771, 1],
  [535, 610, 631, 0], [538, 625, 664, 0], [541, 640, 664, 0], [558, 650, 673, 1], [964, 505, 530, 0], [1083, 505, 536, 1], [1088, 505, 528, 0],
  [1129, 490, 525, 0], [1134, 515, 541, 1], [1142, 520, 541, 0], [1405, 258, 290, 1], [1399, 277, 310, 1], [1409, 290, 342, 0], [1424, 295, 340, 0], [1430, 305, 342, 0],
  [1494, 253, 285, 0], [1497, 250, 280, 0], [1506, 285, 322, 1], [1514, 285, 320, 0], [1524, 300, 367, 0], [1527.500, 345, 383, 1], [1530, 320, 360, 1], [1473, 300, 328, 0], [1583, 275, 307, 0], [1586, 275, 307, 1], [1588, 268, 276, 0],
];
const lead = (x) => at(macdTrace, Math.min(1588, x + 8)) + (at(macdTrace, Math.min(1588, x + 8)) - at(macdTrace, x)) * 0.3;
const macdLines = { y: [], w: [] };
const macdBars = [];
for (let x = 105, i = 0; x < 1588; x += step, i++) {
  macdLines.y.push(`${x},${at(macdTrace, x)}`);
  macdLines.w.push(`${x},${lead(x).toFixed(1)}`);
  const early = (x > 118 && x < 134) || (x > 156 && x < 187) ? 3 : x > 220 ? -3.5 : 0;
  macdBars.push([x, x < 260 ? early : lead(x) - at(macdTrace, x)]);
}
const guides = [188.5, 324.5, 458.5, 592, 725.5, 859.5, 993, 1129, 1262.5, 1396.5, 1529.5];

const notes = [
  ["1", 527, 607, "#f4f"], ["2", 559, 696, "#f4f"], ["3", 921, 486, "#f4f"], ["4", 960, 555, "#f4f"], ["5", 1033, 463, "#f4f"],
  ["(1)", 1035, 429, "#fff"], ["B", 1099, 474, "#f4f"], ["A", 1076, 553, "#f4f"], ["C", 1140, 564, "#f4f"], ["(2)", 1139, 592, "#fff"],
  ["1", 1485, 243, "#f4f"], ["A", 1520, 407, "#fff"], ["或2", 1551, 407, "#0f0"], ["B", 1651, 220, "#fff"], ["或3-3-1", 1683, 220, "#0f0"], ["C(2)", 1701, 353, "#fff"],
];

function ChartDrawing() {
  return (
    <Drawing width="1791" height="760" viewBox="104 157 1791 760" aria-label="chart">
      <g stroke="#780000" strokeDasharray="4 4">
        {guides.map((x, i) => (
          <path key={x} strokeWidth={i === 1 || i === 6 || i === 7 || i === 10 ? 2 : 1} d={`M${x} 249V786M${x} 812V845M${x} 872V917`} />
        ))}
      </g>
      <g shapeRendering="crispEdges">
        {candles.map(([x, a, b, red, w], i) => <path key={i} d={`M${x} ${a}V${b}`} stroke={red ? "#f85050" : "#50f8f8"} strokeWidth={w} />)}
        {spikes.map(([x, a, b, red], i) => <path key={i} d={`M${x} ${a}V${b}`} stroke={red ? "#f85050" : "#50f8f8"} strokeWidth="2" />)}
        {averages.map((m) => <polyline key={m.c} points={m.pts} fill="none" stroke={m.c} strokeWidth="1" />)}
      </g>
      <g shapeRendering="crispEdges" strokeWidth="2">
        <path d="M104 847H149" stroke="#ff8000" />
        <path d="M149 847H304" stroke="#b878ff" />
        <path d="M304 847H1588" stroke="#6488ff" />
      </g>
      <g shapeRendering="crispEdges">
        {macdBars.map(([x, d], i) => (
          <path key={i} d={`M${x} 911V${d > 0.4 ? 916 : d < -0.8 ? 911 + Math.max(-5, d * 1.600) : 913}`} stroke={d > 0.4 ? "#50ff50" : d < -0.8 ? "#f85050" : i % 3 ? "#f85050" : "#50ff50"} strokeWidth="1.500" />
        ))}
        <path d="M1590 912.500H2400" stroke="#00a800" strokeDasharray="5 5" />
        <polyline points={macdLines.w.join(" ")} fill="none" stroke="#fff" strokeWidth="1.500" />
        <polyline points={macdLines.y.join(" ")} fill="none" stroke="#ffff50" strokeWidth="1.500" />
      </g>
      <g fill="none" stroke="#0f0" strokeWidth="2.500">
        <path d="M512 616L1362 383M559 675L1126 475M559 675L1570 408" />
        <path strokeWidth="3" d="M1589 274l25-54 10 17 15-33 10 44 6-14 38 91" />
        <path stroke="#fff" strokeWidth="3" d="M1588 307l45-103 68 121" />
      </g>
      <g fontFamily={`"Liberation Serif", "Noto Sans CJK SC", serif`} fontSize="31">
        {notes.map(([t, x, y, c], i) => <text key={i} x={x} y={y} fill={c} fontWeight="300">{t}</text>)}
      </g>
      <g fontFamily={fixed} fontSize="15" fontWeight="bold" fill="#c0c0c0">
        <text x="218" y="765">6470.00</text>
        <text x="1502" y="262">26951.81</text>
        <path d="M1498 252l5 7M215 770l4-6" stroke="#c0c0c0" />
      </g>
      <g fill="none" stroke="#fff" shapeRendering="crispEdges">
        <path d="M119.500 884.500h15v14h-15zM126.500 884V818M120 818.500l6.500-15 7 15zM135 891.500h64M199.500 884l18 7.500-18 7.500zM124 815l2.500-9 3 9" />
        <path d="M121 770l7.500 9 7.500-9M128.500 779v10M232 883l13 17M245 883l-13 17" />
      </g>
    </Drawing>
  );
}

const yellowBits = {
  star: "M3 0v5l7-3 7 3V0", bars: "M0 5h20M3 2h3M9 2h3M15 2h3", dots: "M0 3h4M7 3h4M14 3h4", ring: "M3 0c2 6 12 6 14 0",
  box: "M2 0v5h16V0", cup: "M8 4h4M9 1h4", lens: "M1 3h7M10 2l8 3", gear: "M3 1h3M14 1h3M8 3h4",
};
const stock = [
  ["讯", 12, 0, 0, null], 15.2, ["自选股", 54, 0, 0, "star"], 6, ["国企指数", 70, 1], 2, ["H 股÷", 50, 1], 3, ["中华指数", 70, 0, 0, "bars"], 13.1,
  ["能 量 潮", 66, 1], 18.1, ["AH联动", 61, 0, 0, "dots"], 3, ["额   度", 56, 1], 12.1, ["环球指数", 70, 0, 0, "ring"], 16.1, ["中港透视", 70, 0, 0, "box"], 22.2,
  ["港股模拟大赛", 102, 0, 1, "cup"], 4, ["规则奖项", 71, 1, 1], 21.2, ["选股", 40, 0, 0, "lens"], 4, ["预警", 40, 1], 12.1, ["设置", 41, 0, 0, "gear"], 3,
  ["赢家讲坛", 72, 1, 1], 3, ["在线客服", 72, 0, 0, "ring"],
];

function StockToolbar() {
  return (
    <StockBar>
      {stock.map((s, i) => {
        if (typeof s === "number") return <StockGap key={i} $w={Math.floor(s)} $n={Math.round((s % 1) * 10)} />;
        const [t, w, small, hot, bit] = s;
        return (
          <StockButton key={i} $w={w} $small={small} $hot={hot}>
            {!small && <svg width="20" height="7" viewBox="0 0 20 7"><path d={yellowBits[bit] || ""} fill="none" stroke="#ffc400" strokeWidth="2.500" /></svg>}
            <span>{t}</span>
          </StockButton>
        );
      })}
    </StockBar>
  );
}

const minGlyph = <svg width="14" height="10"><rect x="1.500" y="5.500" width="11" height="4" fill="#fff" stroke="#556" /></svg>;
const maxGlyph = <svg width="14" height="10"><rect x="2" y="1" width="10" height="8" fill="#fff" stroke="#556" /><rect x="5" y="4" width="4" height="2" fill="#9ab" stroke="#556" /></svg>;
const restoreGlyph = <svg width="14" height="12"><rect x="4.500" y=".5" width="8" height="8" fill="#fff" stroke="#556" /><rect x="1.500" y="3.500" width="8" height="8" fill="#fff" stroke="#556" /><rect x="4.500" y="6.500" width="2" height="2" fill="#9ab" stroke="#556" /></svg>;
const closeGlyph = <svg width="14" height="10"><path d="M3 1l8 8M11 1L3 9" stroke="#445" strokeWidth="4" /><path d="M3 1l8 8M11 1L3 9" stroke="#fff" strokeWidth="2.500" /></svg>;

const arrows = ["M1 1v9M9 1L4 5.500 9 10z", "M8 1L3 5.500 8 10z", "M3 1l5 4.500L3 10z", "M10 1v9M2 1l5 4.500L2 10z"];
const Tip = ({ d }) => <svg width="10" height="8"><path d={d} fill="#333" /></svg>;

const tasks = [
  [50, 0, <><circle cx="15" cy="11" r="11" fill="#d8e8d0" /><circle cx="11" cy="9" r="6" fill="#e0563a" /><circle cx="20" cy="8" r="4" fill="#8ac04a" /></>],
  [16, 0, <path d="M8 2h2M12 2h2M16 2h2M8 5h2M12 5h2M16 5h2" stroke="#445" strokeWidth="1.500" />],
  [64, 0, <circle cx="15" cy="12" r="8" fill="#333" />],
  [60, 1, <path d="M5 9C9 1 20 0 26 1c-4 5-10 8-21 8z" fill="#4fc040" />],
  [60, 0, <><circle cx="15" cy="9" r="8" fill="#111" /><circle cx="12" cy="7" r="2" fill="#fff" /><circle cx="18" cy="7" r="2" fill="#fff" /></>],
  [60, 1, <><circle cx="12" cy="9" r="7" fill="#f4b020" stroke="#7a3a10" /><circle cx="22" cy="9" r="5" fill="#333" /></>],
  [60, 0, <><path d="M0 0h30v10H0z" fill="#ecc928" /><path d="M4 5h3v4M10 5h3v4M16 5h3v4M25 9V1h5" stroke="#6a5200" fill="none" /></>],
  [60, 0, <path d="M4 9q3-7 11-7t11 7z" fill="#d4483c" />],
  [60, 0, <><path d="M0 0h30v10H0z" fill="#f2c130" /><path d="M2 4l10 6H0z" fill="#1e6ab8" /></>],
  [60, 0, <circle cx="15" cy="8" r="7" fill="#111" />],
  [60, 0, <><rect width="30" height="12" rx="6" fill="#eef6fc" /><path d="M12 6l3-4 3 4" stroke="#29a3dd" strokeWidth="2" fill="none" /></>],
  [60, 0, <><circle cx="15" cy="11" r="11" fill="#f07820" /><circle cx="20" cy="6" r="5" fill="#d84ad8" /></>],
  [60, 0, <path d="M4 6q8 4 22-6l-6 10H8z" fill="#d8402a" />],
  [60, 0, <rect width="30" height="14" rx="5" fill="#151515" />],
  [56, 1, <path d="M2 2h10l2 2h14v8H2z" fill="#e8d890" stroke="#3c9a3c" />],
  [58, 1, <path d="M15 0l11 9H4z" fill="#1f70d0" />],
  [60, 1, <><rect width="30" height="12" fill="#1e9088" /><path d="M6 8q4-6 9 0M22 0v10" stroke="#0a3a38" strokeWidth="2" fill="none" /></>],
  [60, 1, <circle cx="17" cy="9" r="8" fill="#c8ddf2" stroke="#1c2436" strokeWidth="2.500" />],
];

const meter = Array.from({ length: 17 }, (_, i) => (i < 2 ? "#222" : i < 5 ? "#f0a050" : i < 9 ? "#f4e060" : i < 13 ? "#a8dc90" : "#6ce0cc"));

const Y = "#ffff50", M = "#ff50ff", G = "#50ff50", O = "#ff8000", P = "#b878ff", B = "#6a94ff", W = "#fff";

export default function App() {
  return (
    <Page>
      <Global />
      <AppWindow>
        <TitleBar>
          <Icon n="app" />
          <TitleText>AutoCAD 2007</TitleText>
          <CaptionGroup>
            <Caption aria-label="最小化">{minGlyph}</Caption>
            <Caption aria-label="还原">{restoreGlyph}</Caption>
            <Caption $close aria-label="关闭">{closeGlyph}</Caption>
          </CaptionGroup>
        </TitleBar>
        <MenuBar>
          {["文件(F)", "编辑(E)", "视图(V)", "插入(I)", "格式(O)", "工具(T)", "绘图(D)", "标注(N)", "修改(M)", "Express", "窗口(W)", "帮助(H)"].map((m) => (
            <MenuItem key={m}>{m}</MenuItem>
          ))}
        </MenuBar>
        <ToolbarRow>
          <Toolbar><Tools list="newDoc open save | print preview publish globe | cut copy paste brush match | undo tri redo triOff | pan zoomRt zoomWin zoomPrev | props design palette sheet markup calc | help" /></Toolbar>
          <Toolbar>
            <Tools list="dLin dAli dArc dOrd | dRad dJog dDia dAng | dQuick dBase dCont | leader tol center | dEdit dTedit dUpd |" />
            <Combo w={100} label="标注样式" off value="" />
            <Tools list="dBrush" />
          </Toolbar>
          <Toolbar>
            <Tools list="tBrush" />
            <Combo w={100} label="文字样式" off pad={2} value="Standard" />
            <Tools list="| dBrush" />
            <Combo w={100} label="标注样式控制" off value="" />
            <Tools list="| tabBrush" />
            <Combo w={100} label="表格样式" off value="" />
          </Toolbar>
        </ToolbarRow>
        <ToolbarRow>
          <Toolbar>
            <Combo w={176} label="工作空间" value="AutoCAD 经典" />
            <Tools list="gear home" />
          </Toolbar>
          <Toolbar>
            <Tools list="layers" />
            <Combo w={300} pad={1} label="图层" value="0" icons={["bulb", "sun", "vpFreeze", "unlock", "box"].map((n) => <Icon key={n} n={n} s={n === "box" ? 12 : 15} />)} />
            <Tools list="layerCur layerPrev" />
          </Toolbar>
          <Toolbar>
            <Combo w={150} pad={3} label="颜色" value="绿" icons={<Icon n="green" s={14} />} />
            <Sep />
            <Combo w={160} pad={4} label="线型" value="ByLayer" icons={<svg width="62" height="2"><path d="M0 1h60" stroke="#000" /></svg>} />
            <Sep />
            <Combo w={125} pad={4} label="线宽" value="0.30 毫米" icons={<svg width="38" height="4"><path d="M0 2h35" stroke="#000" strokeWidth="3" /></svg>} />
            <Sep />
            <Combo w={121} off label="打印样式" value="随颜色" />
          </Toolbar>
        </ToolbarRow>

        <WorkArea>
          <SideBars>
            <SideBar><Tools list="erase copyObj mirror offset array move rotate scale stretch trim extend breakPt breakAt join chamfer fillet explode" /></SideBar>
            <SideBar><Tools list="line xline pline polygon rect arc circle cloud spline ellipse elArc insert block point hatch gradient region table mtext" /></SideBar>
          </SideBars>
          <Desktop>
            <Minimized><Icon n="dwg" /></Minimized>
            <DocWindow>
              <DocTitle>
                <Icon n="dwg" />
                <DocName>D:\上证分析\碾压试验.dwg</DocName>
                <DocCaption aria-label="最小化">{minGlyph}</DocCaption>
                <DocCaption aria-label="最大化">{maxGlyph}</DocCaption>
                <DocCaption $close aria-label="关闭">{closeGlyph}</DocCaption>
              </DocTitle>
              <DocBody>
                <Canvas>
                  <StockToolbar />
                  <OptionRow>
                    <Option $c="#8c8c8c" $gap={28}>不除权</Option>
                    <Option $c={Y} $gap={65}>标准坐标</Option>
                    <Option $c={W} $gap={65}>双股组合</Option>
                    <Option $c={W} $gap={0}>叠加商品</Option>
                  </OptionRow>
                  <Pane $line={2}>
                    <Legend $pad={0}>
                      <CursorMark>] –</CursorMark>
                      <Tint $c={W}>5MA 8678.90</Tint><Tint $c={Y}>10MA1 8703.60</Tint><Tint $c={M}>20MA2 9569.52</Tint><Tint $c={G}>30MA3 10228.79</Tint>
                      <Tint $c={O}>60MA4 11450.44</Tint><Tint $c={P}>120MA5 ----</Tint><Tint $c={B}>250MA6 ----</Tint><Tint $c="#a0a0a0">360MA7 ----</Tint>
                    </Legend>
                  </Pane>
                  <Pane $h={60} $line={1}>
                    <Legend $pad={13}>
                      <Tint $c={W}>AMT ----</Tint><Tint $c={Y}>5MA ----</Tint><Tint $c={M}>10MA1 ----</Tint><Tint $c={G}>15MA2 ----</Tint>
                      <Tint $c={O}>30MA3 ----</Tint><Tint $c={P}>60MA4 ----</Tint><Tint $c={B}>120MA5 ----</Tint>
                    </Legend>
                  </Pane>
                  <Pane $h={67}>
                    <Legend $pad={0}>
                      <Tint $c={W}>DIF -824.79</Tint><Tint $c={Y}>MACD -857.29</Tint><Tint $c={M}>DIF-MACD 32.50</Tint>
                    </Legend>
                  </Pane>
                  <ChartDrawing />
                </Canvas>
                <TabStrip>
                  {arrows.map((d, i) => (
                    <TabArrow key={d} aria-label={`翻页 ${i + 1}`}><svg width="12" height="11"><path d={d} fill="#000" stroke="#000" /></svg></TabArrow>
                  ))}
                  <SheetTab $on $w={38}>模型</SheetTab>
                  <SheetTab $w={42}>布局1</SheetTab>
                  <SheetTab $w={42}>布局2</SheetTab>
                </TabStrip>
              </DocBody>
            </DocWindow>
          </Desktop>
          <SideBars $right>
            <SideBar><Tools list="front back above under" /></SideBar>
          </SideBars>
        </WorkArea>

        <CommandPanel>
          <Grip />
          <CommandBox>
            <HistoryRow>
              <History>{"命令:\n命令: _.erase 找到 1 个"}</History>
              <VScroll><Tip d="M1 6l4-4 4 4z" /><Tip d="M1 2l4 4 4-4z" /></VScroll>
            </HistoryRow>
            <PromptRow>
              命令:
              <PromptInput aria-label="命令" />
              <HScroll><Tip d="M7 0L3 4l4 4z" /><Thumb /><Tip d="M3 0l4 4-4 4z" /></HScroll>
            </PromptRow>
          </CommandBox>
        </CommandPanel>
        <StatusBar>
          <Coords>2.1137E+07, -1.2713E+07, 0.0000</Coords>
          <Modes>
            <Mode>捕捉</Mode><Mode>栅格</Mode><Mode>正交</Mode><Mode>极轴</Mode><Mode $on>对象捕捉</Mode><Mode $on>对象追踪</Mode>
            <ModeSmall $on>DUCS</ModeSmall><ModeSmall $on>DYN</ModeSmall><Mode $on>线宽</Mode><Mode $on>模型</Mode>
          </Modes>
          <Tray><Icon n="dish" /><Icon n="goldLock" /><Icon n="trust" /></Tray>
          <Tip d="M2 4l4 4 4-4z" />
          <Icon n="full" />
        </StatusBar>
        <TaskBar>
          {tasks.map(([w, on, art], i) => (
            <Task key={i} $w={w} $on={on} aria-label={`任务 ${i + 1}`}><svg width="30" height="9">{art}</svg></Task>
          ))}
          <Spacer />
          <Clock>11:14</Clock>
          <ShowDesktop aria-label="显示桌面" />
        </TaskBar>
        <SideTab width="11" height="61" aria-hidden="true">
          <path d="M0 1h7l3 3v53l-3 3H0z" fill="#5a626c" stroke="#1c1c24" strokeWidth="2" />
          <path d="M0 3h6l3 3v4M0 58h6l3-3v-4M9 26v8" fill="none" stroke="#f4d050" strokeWidth="1.500" />
          {meter.map((c, i) => <rect key={i} x="2" y={8 + i * 2.700} width="4" height="1.500" fill={c} />)}
        </SideTab>
        <StartTip role="tooltip">开始</StartTip>
      </AppWindow>
    </Page>
  );
}
